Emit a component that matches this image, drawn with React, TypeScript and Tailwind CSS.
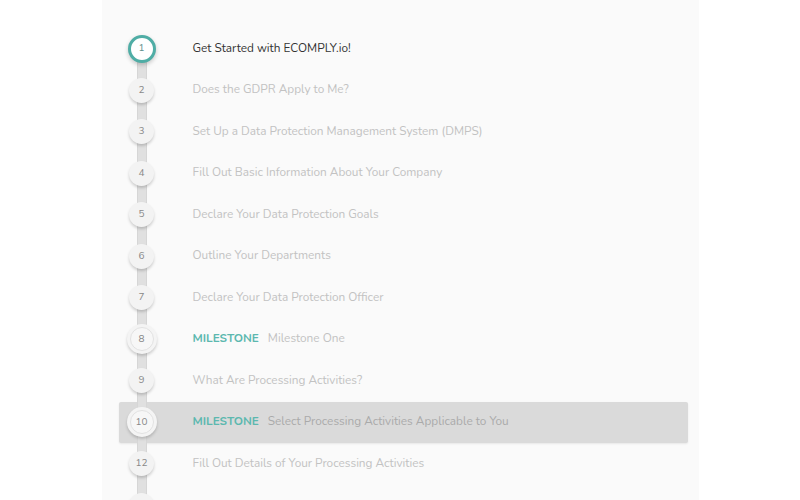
import React from 'react';

type Step = {
  num: number;
  title: string;
  milestone?: boolean;
};

const steps: Step[] = [
  { num: 1, title: 'Get Started with ECOMPLY.io!' },
  { num: 2, title: 'Does the GDPR Apply to Me?' },
  { num: 3, title: 'Set Up a Data Protection Management System (DMPS)' },
  { num: 4, title: 'Fill Out Basic Information About Your Company' },
  { num: 5, title: 'Declare Your Data Protection Goals' },
  { num: 6, title: 'Outline Your Departments' },
  { num: 7, title: 'Declare Your Data Protection Officer' },
  { num: 8, title: 'Milestone One', milestone: true },
  { num: 9, title: 'What Are Processing Activities?' },
  { num: 10, title: 'Select Processing Activities Applicable to You', milestone: true },
  { num: 12, title: 'Fill Out Details of Your Processing Activities' },
  { num: 13, title: '' },
];

const ACTIVE = 1;
const SELECTED = 10;
const LAST = 13;

const StepCircle = ({ step }: { step: Step }) => {
  const label = step.num === LAST ? '' : step.num;
  if (step.num === ACTIVE) {
    return (
      <div className="relative z-10 w-[28px] h-[28px] rounded-full bg-white border-[3px] border-[#4fada5] shadow-[0_2px_4px_rgba(0,0,0,0.2)] flex items-center justify-center text-[10px] text-[#5f8f8b]">
        {label}
      </div>
    );
  }
  if (step.milestone) {
    return (
      <div className="relative z-10 w-[30px] h-[30px] rounded-full bg-[#f4f4f4] shadow-[0_2px_3px_rgba(0,0,0,0.18)] flex items-center justify-center">
        <div className="w-[24px] h-[24px] rounded-full bg-[#f7f7f7] border border-[#e2e2e2] flex items-center justify-center text-[10px] text-[#888]">
          {label}
        </div>
      </div>
    );
  }
  return (
    <div className="relative z-10 w-[25px] h-[25px] rounded-full bg-[#f3f3f3] shadow-[0_2px_3px_rgba(0,0,0,0.18)] flex items-center justify-center text-[10px] text-[#888]">
      {label}
    </div>
  );
};

const StepRow = ({ step }: { step: Step }) => {
  const selected = step.num === SELECTED;
  const active = step.num === ACTIVE;
  return (
    <div
      className={`flex items-center h-[41.5px] rounded-[2px] ${
        selected ? 'bg-[#dadada] shadow-[0_1px_2px_rgba(0,0,0,0.08)]' : ''
      }`}
    >
      <div className="relative w-[46px] h-full flex items-center justify-center">
        <div
          className={`absolute left-[18px] w-[10px] bg-[#e0e0e0] border-x border-[#d6d6d6] ${
            active ? 'top-1/2 bottom-0' : 'top-0 bottom-0'
          }`}
        />
        <StepCircle step={step} />
      </div>
      <div className="ml-[28px] flex items-center text-[11.8px] leading-none">
        {step.milestone && (
          <span className="font-bold text-[#5cb8af] mr-[9px]">MILESTONE</span>
        )}
        <span className={active ? 'text-[#333]' : selected ? 'text-[#aaaaaa]' : 'text-[#c2c2c2]'}>
          {step.title}
        </span>
      </div>
    </div>
  );
};

export default function App() {
  return (
    <div
      className="w-[800px] h-[500px] bg-white overflow-hidden"
      style={{ fontFamily: 'Nunito, Lato, "Open Sans", sans-serif' }}
    >
      <div className="w-[597px] h-full mx-auto bg-[#fafafa] pt-[28px] pl-[17px] pr-[11px]">
        {steps.map((s) => (
          <StepRow key={s.num} step={s} />
        ))}
      </div>
    </div>
  );
}
